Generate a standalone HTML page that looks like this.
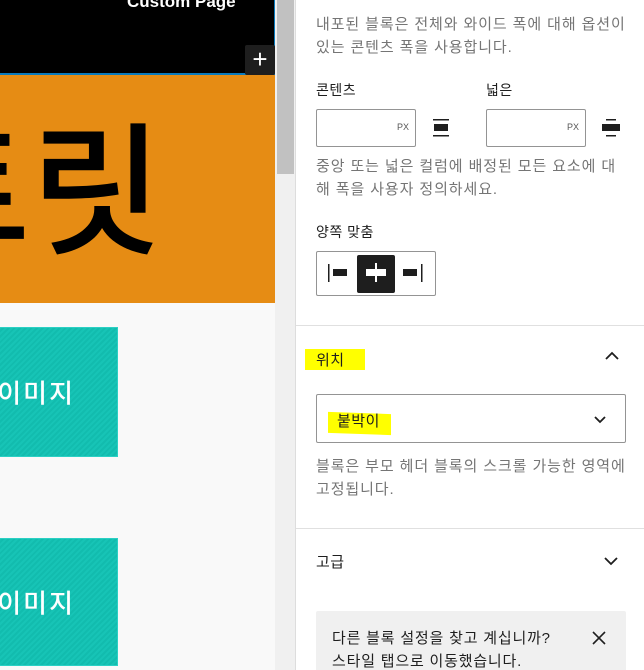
<!DOCTYPE html>
<html style="overflow:hidden;width:644px;height:670px"><head><meta charset="utf-8"><style>
*{box-sizing:border-box;margin:0;padding:0}
body{width:644px;height:670px;overflow:hidden;position:relative;background:#fff;font-family:"Liberation Sans","Noto Sans CJK KR",sans-serif;color:#1e1e1e}
.a{position:absolute}
.help{color:#757575;font-size:15px;line-height:23px;white-space:nowrap;letter-spacing:0.9px}
.lbl{font-size:14px;color:#1e1e1e;white-space:nowrap;letter-spacing:0.5px}
.teal{background:repeating-linear-gradient(135deg,#17c4b6 0 2px,#12bcae 2px 4px);border:1px solid #2bd0c4}
.teal span{position:absolute;right:42px;top:50%;transform:translateY(-50%);color:#fff;font-size:26px;font-weight:500;letter-spacing:2px;white-space:nowrap;font-family:"Noto Sans CJK KR",sans-serif}
</style></head><body>
<div class="a" style="left:0;top:0;width:275px;height:670px;background:#f9f9f9"></div>
<div class="a" style="left:0;top:0;width:275px;height:75px;background:#000;border-right:1px solid #0a7bbd;border-bottom:2px solid #0a7bbd"></div>
<div class="a" style="left:127px;top:-8px;color:#fff;font-size:17px;font-weight:bold">Custom Page</div>
<div class="a" style="left:245px;top:45px;width:30px;height:30px;background:#1e1e1e;border-radius:2px;color:#fff;font-size:26px;line-height:28px;text-align:center">+</div>
<div class="a" style="left:0;top:75px;width:275px;height:228px;background:#e68c14;overflow:hidden">
<div class="a" style="left:-102px;top:-4px;font-size:144px;font-weight:500;color:#000;white-space:nowrap;line-height:220px;font-family:'Noto Sans CJK KR',sans-serif">트릿</div>
</div>
<div class="a teal" style="left:-2px;top:327px;width:120px;height:130px"><span>이미지</span></div>
<div class="a teal" style="left:-2px;top:538px;width:120px;height:128px"><span>이미지</span></div>
<div class="a" style="left:275px;top:0;width:20px;height:670px;background:#f0f0f0"></div>
<div class="a" style="left:277px;top:0;width:17px;height:174px;background:#c1c1c1"></div>
<div class="a" style="left:295px;top:0;width:1px;height:670px;background:#ddd"></div>

<div class="a help" style="left:316px;top:13px">내포된 블록은 전체와 와이드 폭에 대해 옵션이</div>
<div class="a help" style="left:316px;top:36px">있는 콘텐츠 폭을 사용합니다.</div>
<div class="a lbl" style="left:316px;top:80px">콘텐츠</div>
<div class="a lbl" style="left:486px;top:80px">넓은</div>
<div class="a" style="left:316px;top:109px;width:100px;height:38px;border:1px solid #949494;border-radius:2px"><span class="a" style="right:6px;top:12px;font-size:9px;color:#555">PX</span></div>
<div class="a" style="left:486px;top:109px;width:100px;height:38px;border:1px solid #949494;border-radius:2px"><span class="a" style="right:6px;top:12px;font-size:9px;color:#555">PX</span></div>
<svg class="a" style="left:430px;top:117px" width="22" height="22"><rect x="3" y="2" width="16" height="1.5" fill="#1e1e1e"/><rect x="4" y="7" width="14" height="7" fill="#1e1e1e"/><rect x="3" y="18" width="16" height="1.5" fill="#1e1e1e"/></svg>
<svg class="a" style="left:600px;top:117px" width="22" height="22"><rect x="6" y="2" width="10" height="1.5" fill="#1e1e1e"/><rect x="2" y="7" width="18" height="7" fill="#1e1e1e"/><rect x="6" y="18" width="10" height="1.5" fill="#1e1e1e"/></svg>
<div class="a help" style="left:316px;top:155px">중앙 또는 넓은 컬럼에 배정된 모든 요소에 대</div>
<div class="a help" style="left:316px;top:178px">해 폭을 사용자 정의하세요.</div>
<div class="a lbl" style="left:316px;top:222px">양쪽 맞춤</div>
<div class="a" style="left:316px;top:251px;width:120px;height:45px;border:1px solid #949494;border-radius:2px"></div>
<div class="a" style="left:357px;top:255px;width:38px;height:38px;background:#1e1e1e;border-radius:2px"></div>
<svg class="a" style="left:324px;top:262px" width="110" height="24"><rect x="4" y="2" width="1.5" height="18" fill="#1e1e1e"/><rect x="9" y="7" width="14" height="7" fill="#1e1e1e"/><rect x="42" y="7" width="20" height="7" fill="#fff"/><rect x="51" y="1" width="2" height="19" fill="#fff"/><rect x="79" y="7" width="14" height="7" fill="#1e1e1e"/><rect x="97" y="2" width="1.5" height="18" fill="#1e1e1e"/></svg>
<div class="a" style="left:296px;top:325px;width:348px;height:1px;background:#e0e0e0"></div>
<div class="a" style="left:305px;top:349px;width:60px;height:21px;background:#ffff00"></div>
<div class="a lbl" style="left:316px;top:349px;font-size:15px">위치</div>
<svg class="a" style="left:602px;top:348px" width="20" height="16"><path d="M4 11 L10 5 L16 11" stroke="#1e1e1e" stroke-width="1.8" fill="none"/></svg>
<div class="a" style="left:316px;top:394px;width:310px;height:49px;border:1px solid #949494;border-radius:2px"></div>
<div class="a" style="left:328px;top:413px;width:63px;height:21px;background:#ffff00;transform:skewY(2deg)"></div>
<div class="a lbl" style="left:337px;top:410px;font-size:15px">붙박이</div>
<svg class="a" style="left:591px;top:412px" width="18" height="14"><path d="M4 5 L9 10 L14 5" stroke="#1e1e1e" stroke-width="1.8" fill="none"/></svg>
<div class="a help" style="left:316px;top:455px">블록은 부모 헤더 블록의 스크롤 가능한 영역에</div>
<div class="a help" style="left:316px;top:478px">고정됩니다.</div>
<div class="a" style="left:296px;top:528px;width:348px;height:1px;background:#e0e0e0"></div>
<div class="a lbl" style="left:316px;top:551px;font-size:15px">고급</div>
<svg class="a" style="left:601px;top:553px" width="20" height="16"><path d="M4 5 L10 11 L16 5" stroke="#1e1e1e" stroke-width="1.8" fill="none"/></svg>
<div class="a" style="left:316px;top:611px;width:310px;height:59px;background:#f0f0f0;border-radius:2px 2px 0 0"></div>
<div class="a" style="left:332px;top:627px;font-size:15px;line-height:23px;color:#1e1e1e;white-space:nowrap;letter-spacing:0.8px">다른 블록 설정을 찾고 계십니까?<br>스타일 탭으로 이동했습니다.</div>
<svg class="a" style="left:590px;top:629px" width="18" height="18"><path d="M3 3 L15 15 M15 3 L3 15" stroke="#1e1e1e" stroke-width="1.6"/></svg>
</body></html>
